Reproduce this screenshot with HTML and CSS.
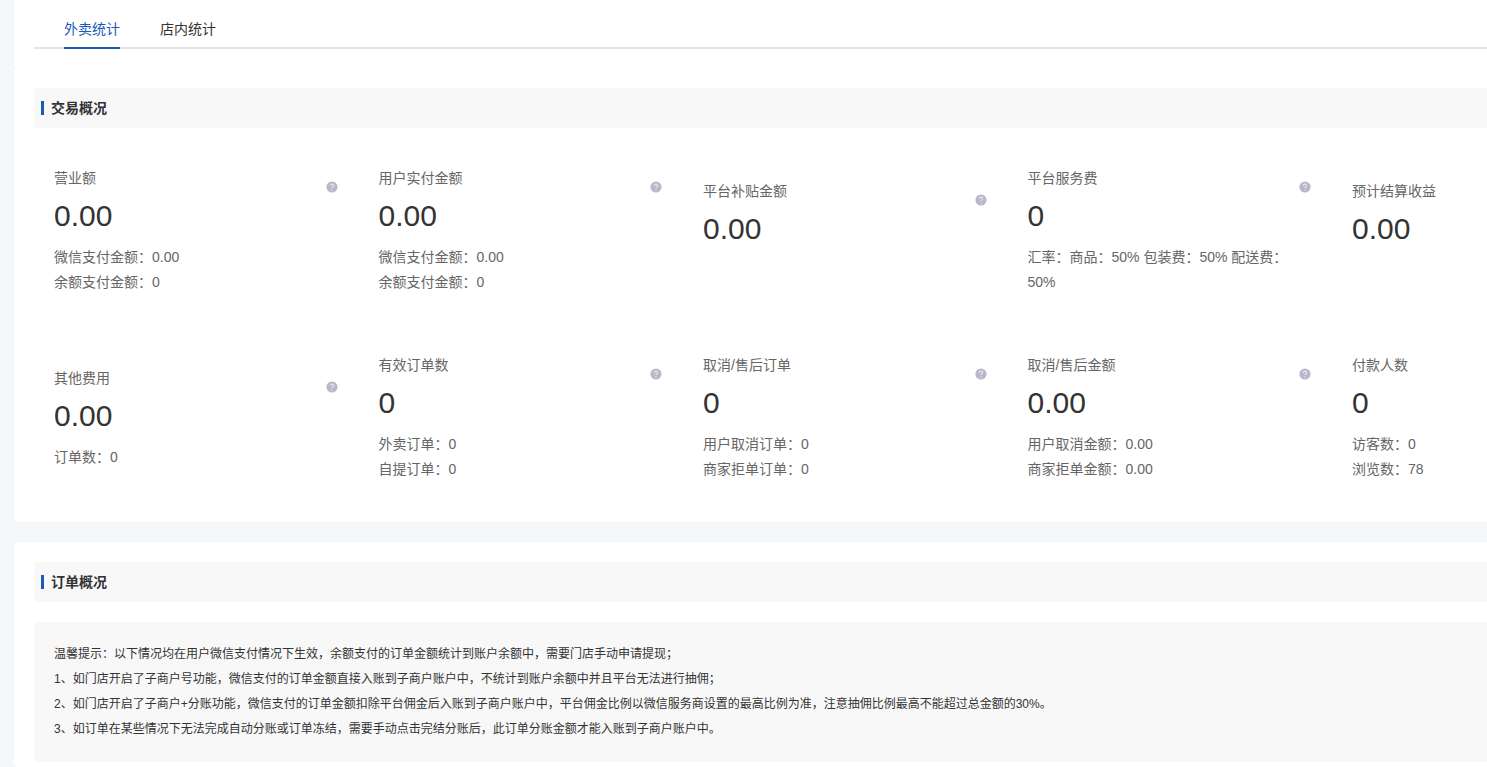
FILE: index.html
```html
<!DOCTYPE html>
<html lang="zh-CN">
<head>
    <meta charset="UTF-8">
    <meta name="viewport" content="width=device-width, initial-scale=1.0">
    <title>外卖统计</title>
    <link rel="stylesheet" href="styles.css">
</head>
<body>
    <!-- Shared help icon -->
    <svg class="sprite" aria-hidden="true">
        <symbol id="help" viewBox="0 0 12 12">
            <circle cx="6" cy="6" r="5.6" fill="#b9b8c9"/>
            <path d="M4.3 4.8C4.3 2.6 7.7 2.6 7.7 4.6C7.7 5.8 6 5.8 6 7.1" fill="none" stroke="#e6e6ee" stroke-width="1.1"/>
            <circle cx="6" cy="8.9" r="0.7" fill="#e6e6ee"/>
        </symbol>
    </svg>

    <main class="page">
        <nav class="panel tab-panel">
            <div class="tabs">
                <button class="tab active" type="button">外卖统计</button>
                <button class="tab" type="button">店内统计</button>
            </div>
        </nav>

        <!-- Trade overview -->
        <section class="panel">
            <h2 class="title">交易概况</h2>
            <div class="stats">
                <div class="stat">
                    <div class="stat-body">
                        <p>营业额</p>
                        <p class="number">0.00</p>
                        <p>微信支付金额：0.00</p>
                        <p>余额支付金额：0</p>
                    </div>
                    <svg class="help"><use href="#help"/></svg>
                </div>
                <div class="stat">
                    <div class="stat-body">
                        <p>用户实付金额</p>
                        <p class="number">0.00</p>
                        <p>微信支付金额：0.00</p>
                        <p>余额支付金额：0</p>
                    </div>
                    <svg class="help"><use href="#help"/></svg>
                </div>
                <div class="stat">
                    <div class="stat-body">
                        <p>平台补贴金额</p>
                        <p class="number">0.00</p>
                        <p></p>
                    </div>
                    <svg class="help"><use href="#help"/></svg>
                </div>
                <div class="stat">
                    <div class="stat-body">
                        <p>平台服务费</p>
                        <p class="number">0</p>
                        <p>汇率：商品：50% 包装费：50% 配送费：50%</p>
                    </div>
                    <svg class="help"><use href="#help"/></svg>
                </div>
                <div class="stat">
                    <div class="stat-body">
                        <p>预计结算收益</p>
                        <p class="number">0.00</p>
                        <p></p>
                    </div>
                </div>
                <div class="stat">
                    <div class="stat-body">
                        <p>其他费用</p>
                        <p class="number">0.00</p>
                        <p>订单数：0</p>
                    </div>
                    <svg class="help"><use href="#help"/></svg>
                </div>
                <div class="stat">
                    <div class="stat-body">
                        <p>有效订单数</p>
                        <p class="number">0</p>
                        <p>外卖订单：0</p>
                        <p>自提订单：0</p>
                    </div>
                    <svg class="help"><use href="#help"/></svg>
                </div>
                <div class="stat">
                    <div class="stat-body">
                        <p>取消/售后订单</p>
                        <p class="number">0</p>
                        <p>用户取消订单：0</p>
                        <p>商家拒单订单：0</p>
                    </div>
                    <svg class="help"><use href="#help"/></svg>
                </div>
                <div class="stat">
                    <div class="stat-body">
                        <p>取消/售后金额</p>
                        <p class="number">0.00</p>
                        <p>用户取消金额：0.00</p>
                        <p>商家拒单金额：0.00</p>
                    </div>
                    <svg class="help"><use href="#help"/></svg>
                </div>
                <div class="stat">
                    <div class="stat-body">
                        <p>付款人数</p>
                        <p class="number">0</p>
                        <p>访客数：0</p>
                        <p>浏览数：78</p>
                    </div>
                </div>
            </div>
        </section>

        <!-- Order overview -->
        <section class="panel order-panel">
            <h2 class="title">订单概况</h2>
            <div class="notice">
                <p>温馨提示：以下情况均在用户微信支付情况下生效，余额支付的订单金额统计到账户余额中，需要门店手动申请提现；</p>
                <p>1、如门店开启了子商户号功能，微信支付的订单金额直接入账到子商户账户中，不统计到账户余额中并且平台无法进行抽佣；</p>
                <p>2、如门店开启了子商户+分账功能，微信支付的订单金额扣除平台佣金后入账到子商户账户中，平台佣金比例以微信服务商设置的最高比例为准，注意抽佣比例最高不能超过总金额的30%。</p>
                <p>3、如订单在某些情况下无法完成自动分账或订单冻结，需要手动点击完结分账后，此订单分账金额才能入账到子商户账户中。</p>
            </div>
        </section>
    </main>
</body>
</html>
```
FILE: styles.css
```css
* {
    box-sizing: border-box;
}

body {
    margin: 0;
    background: #f5f7f9;
    color: #333;
    font-family: "Liberation Sans", "Noto Sans CJK SC", sans-serif;
    font-size: 14px;
    line-height: 25px;
}

p, h2 {
    margin: 0;
}

.sprite {
    position: absolute;
    width: 0;
    height: 0;
}

.page {
    display: flex;
    flex-direction: column;
    min-height: 100vh;
    padding-left: 14px;
}

.panel {
    padding: 20px 0 0 20px;
    background: #fff;
    border-radius: 4px 0 0 4px;
}

.tab-panel {
    padding: 10px 0 19px 20px;
}

.tabs {
    display: flex;
    gap: 40px;
    padding-left: 30px;
    border-bottom: 2px solid #e4e4e6;
}

.tab {
    height: 39px;
    margin-bottom: -2px;
    padding: 2px 0 0;
    border: none;
    border-bottom: 2px solid transparent;
    background: none;
    color: #333;
    font: inherit;
    cursor: pointer;
}

.tab.active {
    border-bottom-color: #1b5ab8;
    color: #1b5ab8;
}

.title {
    display: flex;
    align-items: center;
    gap: 7px;
    height: 40px;
    padding-left: 7px;
    background: #f8f8f8;
    border-radius: 4px 0 0 4px;
    font-size: 14px;
}

.title::before {
    content: "";
    width: 3px;
    height: 14px;
    background: #1b5ab8;
}

.stats {
    display: grid;
    grid-template-columns: repeat(4, 1fr) 155px;
    padding: 9px 0 11px;
}

/* Text and icon share one row, centred as a pair */
.stat {
    display: grid;
    grid-template-columns: 1fr auto;
    align-content: center;
    gap: 8px;
    padding: 29px 21px 29px 20px;
    color: #666;
}

.stat-body p {
    min-height: 25px;
}

.stat-body .number {
    padding: 12px 0 17px;
    color: #333;
    font-size: 30px;
}

.help {
    width: 12px;
    height: 12px;
    margin-top: 15px;
}

.order-panel {
    flex: 1;
    margin-top: 20px;
}

.notice {
    margin-top: 20px;
    padding: 20px;
    background: #f8f8f8;
    border-radius: 4px 0 0 4px;
    font-size: 12px;
}
```
